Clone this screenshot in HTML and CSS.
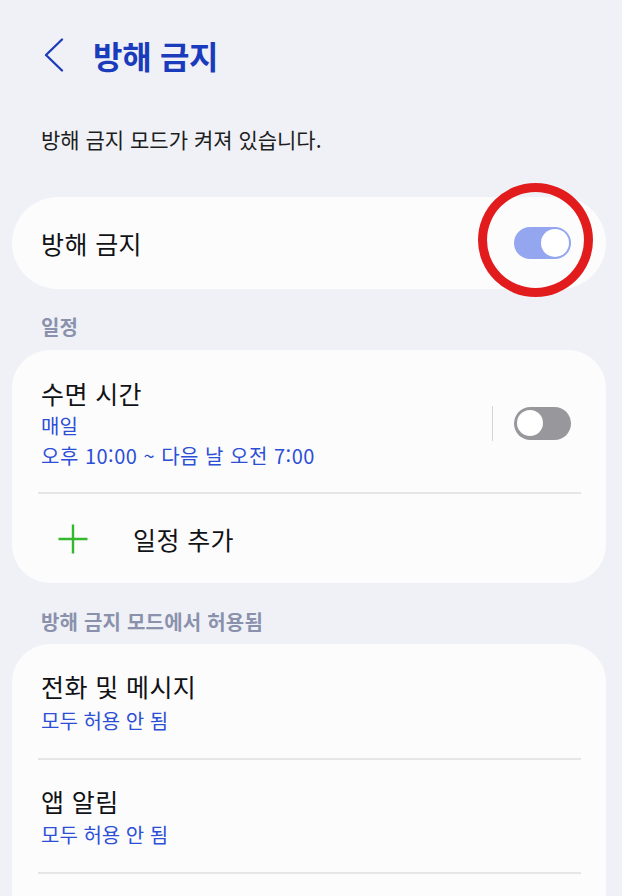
FILE: index.html
```html
<!DOCTYPE html>
<html lang="ko">
<head>
<meta charset="utf-8">
<title>방해 금지</title>
<link rel="stylesheet" href="styles.css">
</head>
<body>
<div class="page">
  <header class="topbar">
    <svg class="back" width="20" height="34" viewBox="0 0 20 34" aria-hidden="true">
      <polyline points="18,1.5 2,17 18,32.5" fill="none" stroke="#1b3bbd" stroke-width="2.3" stroke-linecap="round" stroke-linejoin="round"/>
    </svg>
    <h1 class="title">방해 금지</h1>
  </header>

  <p class="status">방해 금지 모드가 켜져 있습니다.</p>

  <section class="card main-card">
    <span class="row-title">방해 금지</span>
    <div class="toggle-wrap">
      <span class="toggle on"><span class="knob"></span></span>
      <span class="highlight"></span>
    </div>
  </section>

  <h2 class="section-label label-schedule">일정</h2>
  <section class="card">
    <div class="row schedule-row">
      <div class="row-text">
        <div class="row-title">수면 시간</div>
        <div class="row-sub sub-first">매일</div>
        <div class="row-sub sub-second">오후 10:00 ~ 다음 날 오전 7:00</div>
      </div>
      <span class="vdivider"></span>
      <span class="toggle off"><span class="knob"></span></span>
    </div>
    <div class="sep"></div>
    <div class="row add-row">
      <svg class="plus" width="30" height="30" viewBox="0 0 30 30" aria-hidden="true">
        <path d="M15 0.5V29.5M0.5 15H29.5" stroke="#35b82c" stroke-width="2.4" fill="none"/>
      </svg>
      <span class="row-title">일정 추가</span>
    </div>
  </section>

  <h2 class="section-label label-allowed">방해 금지 모드에서 허용됨</h2>
  <section class="card last-card">
    <div class="item item-one">
      <div class="row-title">전화 및 메시지</div>
      <div class="row-sub item-sub">모두 허용 안 됨</div>
    </div>
    <div class="sep"></div>
    <div class="item item-two">
      <div class="row-title">앱 알림</div>
      <div class="row-sub item-sub">모두 허용 안 됨</div>
    </div>
    <div class="sep"></div>
    <div class="tail"></div>
  </section>
</div>
</body>
</html>
```

FILE: styles.css
```css
* { box-sizing: border-box; }

html, body {
  margin: 0;
  padding: 0;
  background: #f0f1f6;
}

body {
  font-family: "Noto Sans CJK KR", "Noto Sans", "Liberation Sans", sans-serif;
  color: #111216;
  width: 622px;
  height: 896px;
  overflow: hidden;
}

.page {
  padding: 0 16px 0 12px;
}

.topbar {
  display: flex;
  align-items: center;
  height: 56px;
  margin-top: 27px;
  padding-left: 32px;
}

.back { display: block; }

.title {
  margin: 0 0 0 29px;
  font-size: 32px;
  font-weight: 700;
  line-height: 56px;
  color: #1b3bbd;
  letter-spacing: -0.3px;
}

.status {
  margin: 42px 0 0 29px;
  font-size: 21px;
  line-height: 28px;
  color: #1c1d22;
}

.card {
  background: #fcfcfd;
  border-radius: 38px;
}

.main-card {
  margin-top: 44px;
  height: 92px;
  border-radius: 46px;
  display: flex;
  align-items: center;
  justify-content: space-between;
  padding: 0 35px 0 29px;
}

.row-title {
  font-size: 25px;
  line-height: 32px;
  color: #111216;
  letter-spacing: 0.4px;
}

.toggle-wrap {
  position: relative;
  width: 57px;
  height: 32px;
}

.toggle {
  display: block;
  position: relative;
  width: 57px;
  height: 32px;
  border-radius: 16px;
}

.toggle.on { background: #94a6ef; }
.toggle.off { background: #98979c; height: 33px; border-radius: 17px; }

.knob {
  position: absolute;
  top: 2px;
  width: 28px;
  height: 28px;
  border-radius: 50%;
  background: #ffffff;
}

.toggle.on .knob { right: 2px; }
.toggle.off .knob { left: 3px; top: 3.5px; width: 26px; height: 26px; }

.highlight {
  position: absolute;
  left: -36px;
  top: -44px;
  width: 115px;
  height: 114px;
  border: 9px solid #e21b1d;
  border-radius: 50%;
}

.section-label {
  margin: 0 0 0 29px;
  font-size: 20px;
  font-weight: 700;
  line-height: 24px;
  color: #8a91ad;
}

.label-schedule { margin-top: 26px; margin-bottom: 11px; }
.label-allowed { margin-top: 27px; margin-bottom: 10px; letter-spacing: 0.2px; }

.row {
  display: flex;
  align-items: center;
}

.schedule-row {
  padding: 27px 35px 23px 29px;
}

.row-text { flex: 1; }

.row-sub {
  font-size: 20px;
  color: #2c4fd6;
}

.sub-first { line-height: 34px; }
.sub-second { line-height: 26px; letter-spacing: 0.5px; }

.vdivider {
  width: 1.5px;
  height: 35px;
  background: #d3d3d7;
  margin-right: 21px;
}

.sep {
  height: 2px;
  background: #e6e6e9;
  margin: 0 25px 0 26px;
}

.add-row {
  height: 89px;
  padding-left: 46px;
}

.plus { display: block; margin-right: 45px; }

.item { padding-left: 29px; }
.item-one { padding-top: 26px; padding-bottom: 18px; }
.item-one .item-sub { line-height: 38px; }
.item-two { padding-top: 25px; padding-bottom: 19px; }
.item-two .item-sub { line-height: 36px; }

.tail { height: 60px; }
```
